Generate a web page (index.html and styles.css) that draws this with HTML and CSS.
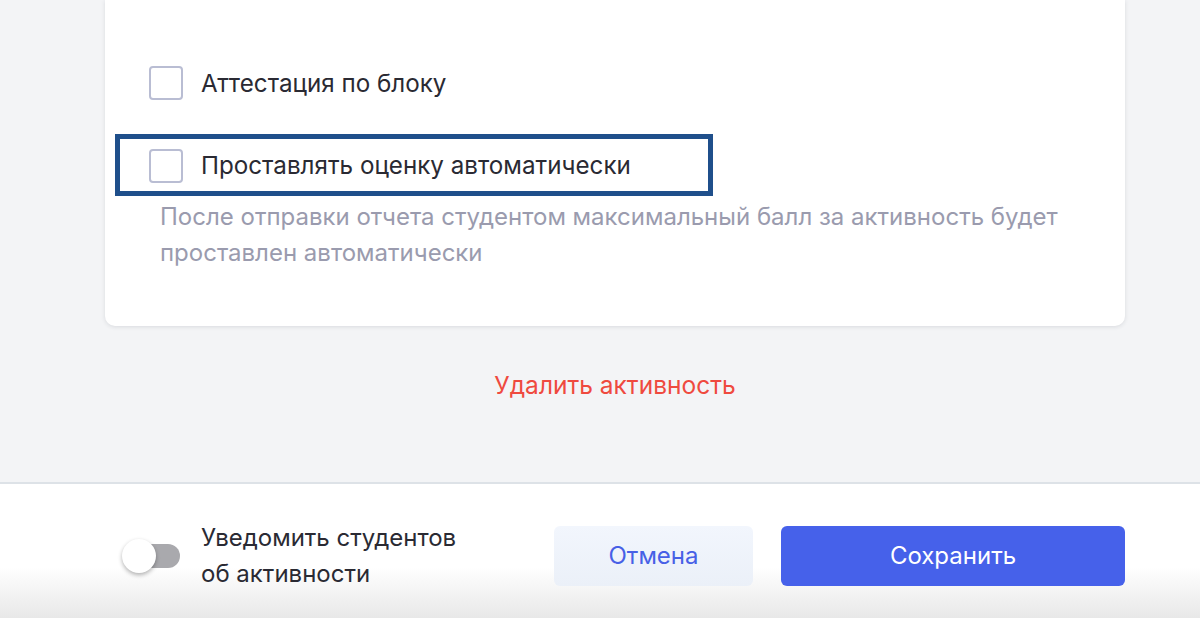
FILE: index.html
```html
<!DOCTYPE html>
<html lang="ru">
<head>
<meta charset="utf-8">
<link rel="stylesheet" href="styles.css">
</head>
<body>
<div class="page">
  <main class="content">
    <section class="card">
      <label class="check-row">
        <span class="checkbox"></span>
        <span class="check-label">Аттестация по блоку</span>
      </label>
      <label class="check-row focused">
        <span class="checkbox"></span>
        <span class="check-label">Проставлять оценку автоматически</span>
      </label>
      <p class="hint">После отправки отчета студентом максимальный балл за активность будет проставлен автоматически</p>
    </section>
    <div class="danger-wrap"><a class="danger">Удалить активность</a></div>
  </main>
  <footer class="footer">
    <div class="notify">
      <span class="toggle"><span class="knob"></span></span>
      <span class="notify-label">Уведомить студентов<br>об активности</span>
    </div>
    <button class="btn btn-cancel">Отмена</button>
    <button class="btn btn-save">Сохранить</button>
  </footer>
</div>
</body>
</html>
```
FILE: styles.css
```css
* { box-sizing: border-box; }
html, body { margin: 0; padding: 0; }
body {
  width: 1200px;
  height: 618px;
  overflow: hidden;
  background: #f3f4f6;
  font-family: "Inter", "Noto Sans", sans-serif;
  color: #2a2a33;
}
.page { display: flex; flex-direction: column; height: 618px; }
.content {
  height: 482px;
  padding: 0 75px 0 105px;
}
.card {
  width: 1020px;
  background: #fff;
  border-radius: 0 0 10px 10px;
  box-shadow: 0 1px 4px rgba(30, 40, 60, 0.12);
  padding: 66px 0 55px 0;
}
.check-row {
  display: flex;
  align-items: center;
  gap: 18px;
  padding-left: 44px;
  height: 34px;
}
.checkbox {
  width: 34px;
  height: 34px;
  border: 2px solid #b9bdd3;
  border-radius: 4px;
  background: #fff;
  flex: none;
}
.check-label {
  font-size: 24.2px;
}
.check-row.focused {
  margin: 34px 0 0 10px;
  width: 598px;
  height: 62px;
  border: 5px solid #1f4f8b;
  padding-left: 29px;
  padding-top: 1px;
}
.hint {
  margin: 3px 0 0 55px;
  font-family: "Inter", "Noto Sans", sans-serif;
  font-size: 24px;
  line-height: 36px;
  color: #9a9bae;
  width: 920px;
}
.danger-wrap {
  width: 1020px;
  text-align: center;
  padding-top: 44px;
}
.danger {
  font-size: 24.5px;
  color: #ef4a3f;
}
.footer {
  height: 136px;
  border-top: 2px solid #dde2e7;
  background: linear-gradient(#ffffff 0%, #ffffff 62%, #e8e8e8 100%);
  display: flex;
  align-items: center;
  padding: 9px 75px 0 122px;
}
.notify { display: flex; align-items: center; gap: 21px; width: 432px; }
.toggle {
  position: relative;
  width: 58px;
  height: 34px;
  display: flex;
  align-items: center;
}
.toggle::before {
  content: "";
  display: block;
  margin-left: 8px;
  width: 50px;
  height: 24px;
  border-radius: 12px;
  background: #a9a9ad;
}
.knob {
  position: absolute;
  left: 0;
  top: 0;
  width: 34px;
  height: 34px;
  border-radius: 50%;
  background: #fff;
  box-shadow: 0 2px 4px rgba(0,0,0,0.3);
}
.notify-label {
  font-size: 24px;
  line-height: 36px;
  color: #2a2a33;
}
.btn {
  height: 60px;
  border: none;
  border-radius: 6px;
  font-family: "Inter", "Noto Sans", sans-serif;
  font-size: 24px;
}
.btn-cancel {
  width: 199px;
  background: linear-gradient(#f2f6fd, #ebf0f8);
  color: #4760e6;
}
.btn-save {
  width: 344px;
  margin-left: 28px;
  background: #4661ea;
  color: #fff;
}
```
